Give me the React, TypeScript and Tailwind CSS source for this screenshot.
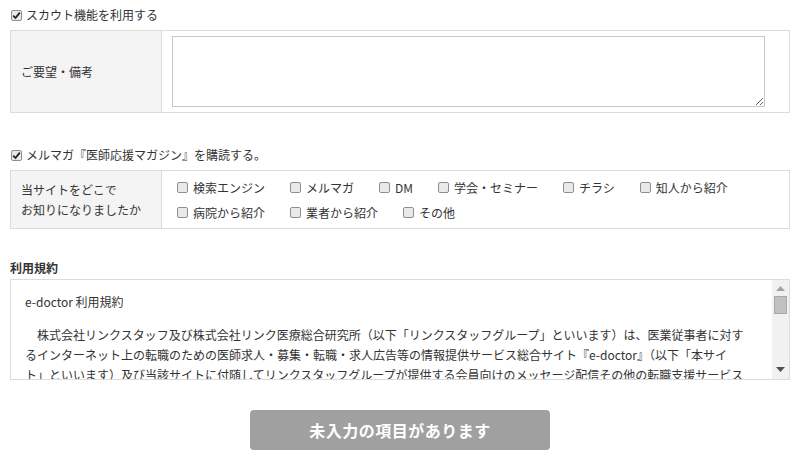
import React from 'react';

const font = { fontFamily: '"Noto Sans CJK JP", "Noto Sans", sans-serif' };

const Box: React.FC<{ checked?: boolean }> = ({ checked }) => (
  <span className="w-[11px] h-[11px] shrink-0 rounded-[2px] border border-[#8e8e8e] bg-[#e9e9e9] flex items-center justify-center">
    {checked && (
      <svg width="9" height="9" viewBox="0 0 9 9">
        <path d="M1.2 4.6 L3.5 7 L7.8 1.6" fill="none" stroke="#222" strokeWidth="1.8" />
      </svg>
    )}
  </span>
);

const CheckRow: React.FC<{ label: string }> = ({ label }) => (
  <div className="flex items-center h-[20px] pl-[1px]">
    <Box checked />
    <span className="ml-[4px]">{label}</span>
  </div>
);

const Option: React.FC<{ label: string }> = ({ label }) => (
  <span className="inline-flex items-center mr-[25px]">
    <Box />
    <span className="ml-[5px]">{label}</span>
  </span>
);

const row1 = ['検索エンジン', 'メルマガ', 'DM', '学会・セミナー', 'チラシ', '知人から紹介'];
const row2 = ['病院から紹介', '業者から紹介', 'その他'];

export default function App() {
  return (
    <div className="w-[800px] h-[470px] bg-white px-[10px] pt-[5px] text-[12px] text-[#333]" style={font}>
      <CheckRow label="スカウト機能を利用する" />

      {/* ご要望 */}
      <div className="mt-[5px] flex border border-[#dcdcdc]">
        <div className="w-[151px] shrink-0 bg-[#f4f4f4] border-r border-[#dcdcdc] flex items-center pl-[10px]">
          ご要望・備考
        </div>
        <div className="flex-1 pl-[10px] py-[5px]">
          <textarea className="block w-[593px] h-[71px] border border-[#c8c8c8] bg-white outline-none" />
        </div>
      </div>

      <div className="mt-[32px]">
        <CheckRow label="メルマガ『医師応援マガジン』を購読する。" />
      </div>

      {/* どこで */}
      <div className="mt-[5px] flex border border-[#dcdcdc]">
        <div className="w-[151px] shrink-0 bg-[#f4f4f4] border-r border-[#dcdcdc] flex items-center pl-[10px] leading-[20px]">
          当サイトをどこで<br />お知りになりましたか
        </div>
        <div className="flex-1 pl-[15px] pt-[4px] pb-[3px] leading-[25px]">
          <div className="flex">{row1.map((l) => <Option key={l} label={l} />)}</div>
          <div className="flex">{row2.map((l) => <Option key={l} label={l} />)}</div>
        </div>
      </div>

      {/* 利用規約 */}
      <div className="mt-[29px] font-bold leading-[20px]">利用規約</div>
      <div className="mt-[1px] flex h-[101px] border border-[#dcdcdc]">
        <div className="flex-1 overflow-hidden pl-[14px] pt-[12px] leading-[20px] whitespace-nowrap">
          <div>e-doctor 利用規約</div>
          <div className="mt-[13px]">
            <div>　株式会社リンクスタッフ及び株式会社リンク医療総合研究所（以下「リンクスタッフグループ」といいます）は、医業従事者に対す</div>
            <div>るインターネット上の転職のための医師求人・募集・転職・求人広告等の情報提供サービス総合サイト『e-doctor』（以下「本サイ</div>
            <div>ト」といいます）及び当該サイトに付随してリンクスタッフグループが提供する会員向けのメッセージ配信その他の転職支援サービス</div>
          </div>
        </div>
        <div className="w-[17px] shrink-0 bg-[#f1f1f1] flex flex-col items-center">
          <svg className="mt-[6px]" width="9" height="5" viewBox="0 0 9 5">
            <path d="M0 5 L4.5 0 L9 5 Z" fill="#a3a3a3" />
          </svg>
          <div className="mt-[5px] w-[13px] h-[18px] bg-[#c1c1c1] border border-[#a8a8a8]" />
          <div className="flex-1" />
          <svg className="mb-[7px]" width="9" height="5" viewBox="0 0 9 5">
            <path d="M0 0 L9 0 L4.5 5 Z" fill="#505050" />
          </svg>
        </div>
      </div>

      <div className="mt-[30px] flex justify-center">
        <button className="w-[300px] h-[40px] rounded-[4px] bg-[#a0a0a0] text-white font-bold text-[16px] tracking-[0.5px]">
          未入力の項目があります
        </button>
      </div>
    </div>
  );
}
